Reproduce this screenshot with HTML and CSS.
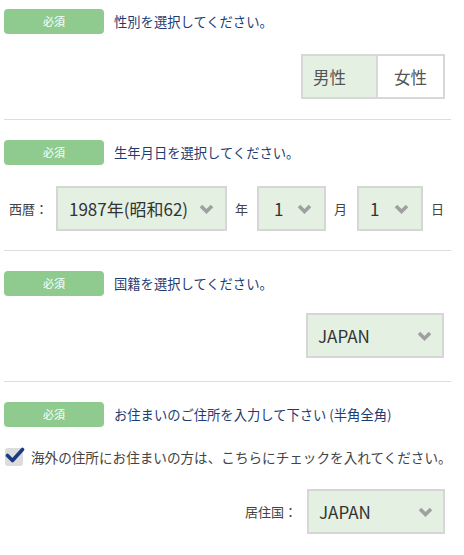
FILE: index.html
```html
<!DOCTYPE html>
<html lang="ja">
<head>
<meta charset="utf-8">
<link rel="stylesheet" href="styles.css">
</head>
<body>
<div class="form">
  <section class="sec sec-first">
    <div class="head"><span class="badge">必須</span><span class="label">性別を選択してください。</span></div>
    <div class="row row-right gap-20">
      <div class="seg">
        <span class="seg-item seg-on">男性</span>
        <span class="seg-item seg-off">女性</span>
      </div>
    </div>
  </section>
  <section class="sec sec-b19">
    <div class="head"><span class="badge">必須</span><span class="label">生年月日を選択してください。</span></div>
    <div class="row gap-21 birth">
      <span class="unit era">西暦：</span>
      <div class="sel sel-year"><span class="sel-text">1987年(昭和62)</span><svg class="chev" width="15" height="10" viewBox="0 0 15 10"><polyline points="2,2 7.5,7.5 13,2" fill="none" stroke="#a0a0a0" stroke-width="3.6"/></svg></div>
      <span class="unit">年</span>
      <div class="sel sel-small"><span class="sel-text">1</span><svg class="chev" width="15" height="10" viewBox="0 0 15 10"><polyline points="2,2 7.5,7.5 13,2" fill="none" stroke="#a0a0a0" stroke-width="3.6"/></svg></div>
      <span class="unit">月</span>
      <div class="sel sel-small sel-day"><span class="sel-text">1</span><svg class="chev" width="15" height="10" viewBox="0 0 15 10"><polyline points="2,2 7.5,7.5 13,2" fill="none" stroke="#a0a0a0" stroke-width="3.6"/></svg></div>
      <span class="unit">日</span>
    </div>
  </section>
  <section class="sec sec-b23">
    <div class="head"><span class="badge">必須</span><span class="label">国籍を選択してください。</span></div>
    <div class="row row-right gap-17 pr-7">
      <div class="sel sel-country"><span class="sel-text">JAPAN</span><svg class="chev" width="15" height="10" viewBox="0 0 15 10"><polyline points="2,2 7.5,7.5 13,2" fill="none" stroke="#a0a0a0" stroke-width="3.6"/></svg></div>
    </div>
  </section>
  <section class="sec sec-last">
    <div class="head"><span class="badge">必須</span><span class="label">お住まいのご住所を入力して下さい (半角全角)</span></div>
    <label class="check gap-21">
      <span class="box"><svg class="tick" width="20" height="17" viewBox="0 0 20 17"><polyline points="2.5,8.5 7.5,13.5 17.5,2.5" fill="none" stroke="#1b3a82" stroke-width="3.6" stroke-linecap="round" stroke-linejoin="round"/></svg></span>
      <span class="check-text">海外の住所にお住まいの方は、こちらにチェックを入れてください。</span>
    </label>
    <div class="row row-right gap-23">
      <span class="unit res">居住国：</span>
      <div class="sel sel-country"><span class="sel-text">JAPAN</span><svg class="chev" width="15" height="10" viewBox="0 0 15 10"><polyline points="2,2 7.5,7.5 13,2" fill="none" stroke="#a0a0a0" stroke-width="3.6"/></svg></div>
    </div>
  </section>
</div>
</body>
</html>
```
FILE: styles.css
```css
html, body {
  margin: 0;
  padding: 0;
  background: #ffffff;
}
body {
  font-family: "Noto Sans CJK JP", "Noto Sans", sans-serif;
  color: #333333;
}
.form {
  width: 447px;
  margin-left: 4px;
}
.sec {
  padding: 20px 0 20px;
  border-bottom: 1px solid #dddddd;
}
.sec-first { padding-top: 9px; }
.sec-b19 { padding-bottom: 19px; }
.sec-b23 { padding-bottom: 23px; }
.sec-last { border-bottom: none; padding-bottom: 21px; }

.head {
  display: flex;
  align-items: center;
  height: 25px;
}
.badge {
  width: 100px;
  height: 25px;
  border-radius: 4px;
  background: #8fcb8e;
  color: #ffffff;
  font-size: 11px;
  line-height: 25px;
  text-align: center;
  flex-shrink: 0;
}
.label {
  margin-left: 10px;
  font-size: 13.3px;
  color: #1f3c72;
  line-height: 1;
  white-space: nowrap;
}
.row {
  display: flex;
  align-items: center;
}
.row-right {
  justify-content: flex-end;
  padding-right: 6px;
}
.pr-7 { padding-right: 7px; }
.gap-17 { margin-top: 17px; }
.gap-20 { margin-top: 20px; }
.gap-21 { margin-top: 21px; }
.gap-23 { margin-top: 23px; }

.seg {
  display: flex;
  height: 45px;
  box-sizing: border-box;
  border: 2px solid #d8d8d8;
}
.seg-item {
  display: flex;
  align-items: center;
  font-size: 16.5px;
  color: #555555;
  box-sizing: border-box;
  height: 41px;
}
.seg-on {
  width: 75px;
  padding-left: 10px;
  background: #e3f0e2;
  border-right: 2px solid #d8d8d8;
}
.seg-off {
  width: 65px;
  justify-content: center;
  background: #ffffff;
}

.sel {
  display: flex;
  align-items: center;
  justify-content: space-between;
  height: 45px;
  box-sizing: border-box;
  border: 2px solid #d6d6d6;
  background: #e3f0e2;
  color: #333333;
  font-size: 17px;
  padding: 0 11px 0 11px;
}
.sel-text { line-height: 1; white-space: nowrap; }
.chev { display: block; flex-shrink: 0; }

.birth { padding-left: 5px; }
.unit {
  font-size: 13px;
  color: #444444;
  white-space: nowrap;
}
.era { width: 47px; }
.sel-year { width: 171px; margin-right: 8px; }
.sel-small { width: 69px; margin: 0 8px 0 9px; padding-left: 15px; padding-right: 12px; }
.sel-day { width: 66px; margin: 0 8px 0 10px; padding-left: 11px; padding-right: 12px; }
.sel-country { width: 138px; padding-left: 10px; padding-right: 10px; }
.res { margin-right: 10px; }

.check {
  display: flex;
  align-items: center;
  height: 18px;
  padding-left: 1px;
}
.box {
  position: relative;
  width: 18px;
  height: 18px;
  border-radius: 3px;
  background: #dcdcdc;
  flex-shrink: 0;
}
.tick {
  position: absolute;
  left: 0px;
  top: -1px;
}
.check-text {
  margin-left: 8px;
  font-size: 13.6px;
  color: #444444;
  white-space: nowrap;
}
```
